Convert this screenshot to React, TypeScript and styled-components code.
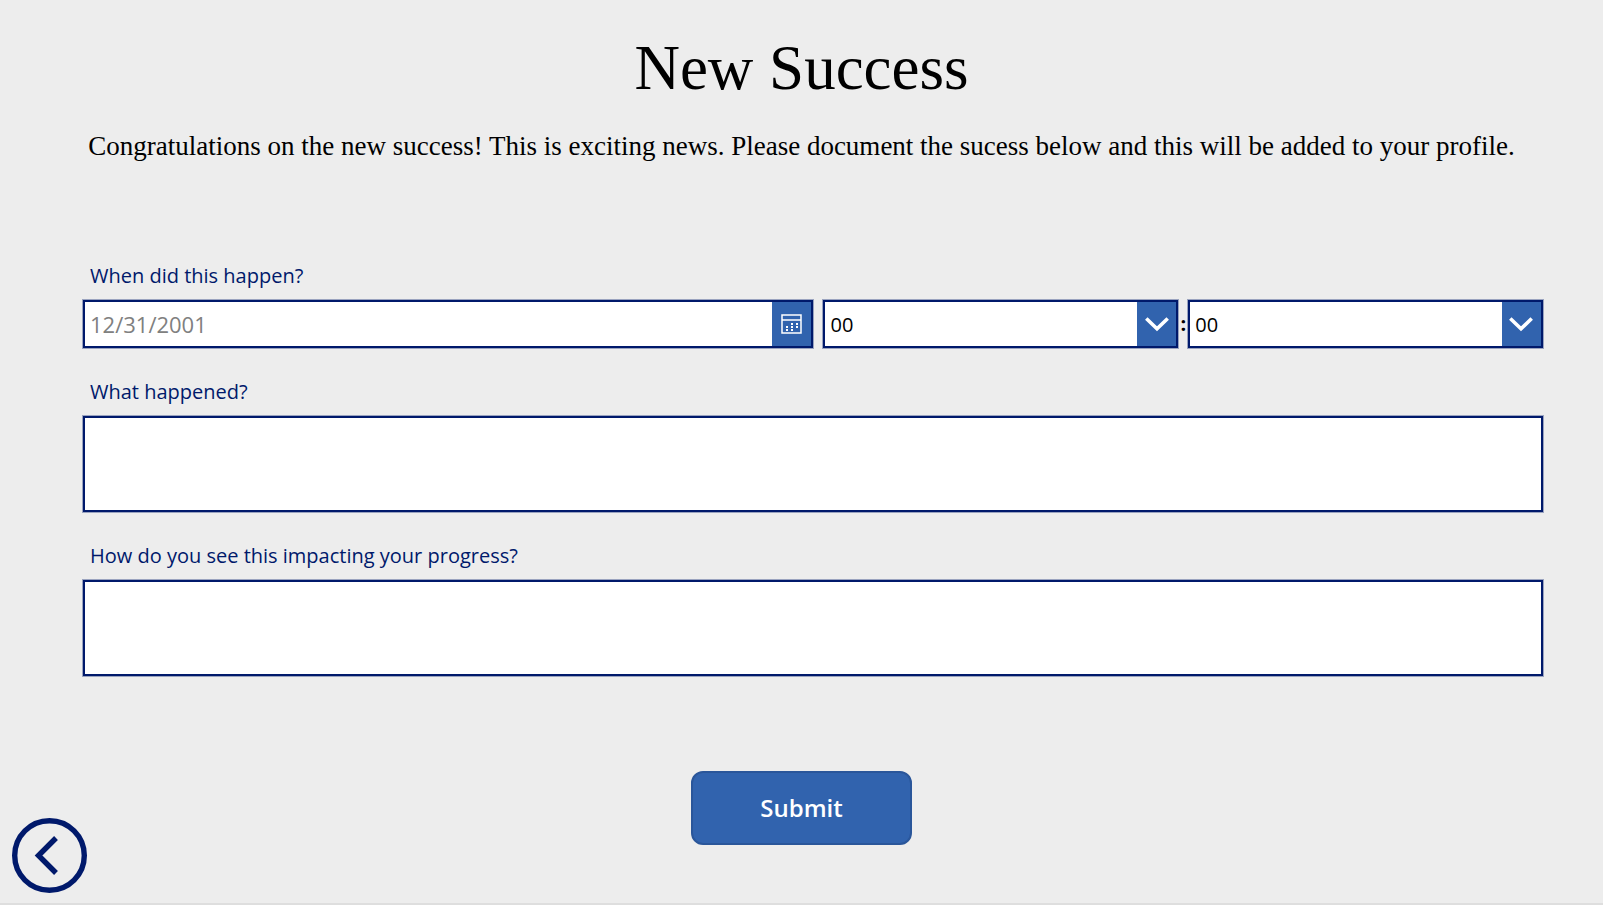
import React from "react";
import styled, { createGlobalStyle } from "styled-components";

const navy = "#00196b";
const blue = "#3163ae";
const sans = `"Open Sans", "Segoe UI", sans-serif`;
const serif = `Georgia, "Liberation Serif", serif`;

const GlobalStyle = createGlobalStyle`
  * { box-sizing: border-box; }
  body { margin: 0; background: #ededed; }
`;

const Page = styled.main`
  display: flex;
  flex-direction: column;
  min-height: 100vh;
  border-bottom: 2px solid #dedede;
  font-family: ${sans};
  color: ${navy};
`;

const Header = styled.header`
  padding: 30px 60px 0;
  font-family: ${serif};
  text-align: center;
  color: #000;
`;

const Title = styled.h1`
  margin: 0;
  font-size: 63px;
  line-height: 76px;
  font-weight: 400;
`;

const Intro = styled.p`
  margin: 22px 0 0;
  font-size: 27px;
  line-height: 36px;
`;

const Form = styled.form`
  flex: 1;
  display: flex;
  flex-direction: column;
`;

const Fields = styled.div`
  display: flex;
  flex-direction: column;
  gap: 28px;
  padding: 96px 60px 0 83px;
`;

const Field = styled.div`
  display: flex;
  flex-direction: column;
  gap: 8px;
`;

const Label = styled.label`
  padding-left: 7px;
  font-size: 20px;
  line-height: 32px;
`;

const DateTimeRow = styled.div`
  display: grid;
  grid-template-columns: 731fr 10px 355fr 10px 355fr;
`;

const Box = styled.div`
  display: grid;
  grid-template-columns: minmax(0, 1fr) 39px;
  height: 48px;
  border: 2px solid ${navy};
  box-shadow: 0 0 0 1px rgba(0, 25, 107, 0.35);
  background: #fff;
`;

const DateInput = styled.input`
  min-width: 0;
  padding: 0 5px;
  border: 0;
  outline: 0;
  background: transparent;
  font: 22px ${sans};
  color: #333;
  &::placeholder { color: #808080; opacity: 1; }
`;

const TimeSelect = styled.select`
  grid-area: 1 / 1 / 2 / 3;
  appearance: none;
  padding: 0 45px 0 5px;
  border: 0;
  border-radius: 0;
  outline: 0;
  background: transparent;
  font: 20px ${sans};
  color: #000;
`;

const IconButton = styled.button`
  display: flex;
  align-items: center;
  justify-content: center;
  padding: 0;
  border: 0;
  background: ${blue};
  color: #fff;
  cursor: pointer;
`;

const Arrow = styled.span`
  grid-area: 1 / 2 / 2 / 3;
  display: flex;
  align-items: center;
  justify-content: center;
  background: ${blue};
  pointer-events: none;
`;

const Colon = styled.span`
  font-size: 20px;
  line-height: 48px;
  font-weight: 700;
  text-align: center;
  color: #000;
`;

const TextArea = styled.textarea`
  display: block;
  width: 100%;
  height: 96px;
  padding: 8px;
  border: 2px solid ${navy};
  border-radius: 0;
  box-shadow: 0 0 0 1px rgba(0, 25, 107, 0.35);
  outline: 0;
  resize: none;
  background: #fff;
  font: 20px ${sans};
`;

const Actions = styled.div`
  flex: 1;
  display: grid;
  grid-template-columns: 1fr auto 1fr;
  margin-top: 95px;
  padding: 0 12px 10px;
`;

const Submit = styled.button`
  align-self: start;
  width: 221px;
  height: 74px;
  padding: 0 0 2px;
  border: 2px solid #2a569a;
  border-radius: 12px;
  background: ${blue};
  font: 600 24px ${sans};
  color: #fff;
  cursor: pointer;
`;

const Back = styled.button`
  align-self: end;
  justify-self: start;
  width: 75px;
  height: 75px;
  padding: 0;
  border: 0;
  background: none;
  cursor: pointer;
  svg { display: block; }
`;

function CalendarIcon() {
  const dots = [[10, 9], [15, 9], [5, 12], [10, 12], [15, 12], [5, 15], [10, 15]];
  return (
    <svg width="21" height="20" viewBox="0 0 21 20" aria-hidden="true">
      <path d="M1 1h19v18H1zM1 6h19" fill="none" stroke="#fff" strokeWidth="1.5" />
      {dots.map(([x, y]) => (
        <rect key={`${x}-${y}`} x={x} y={y} width="2" height="2" fill="#fff" />
      ))}
    </svg>
  );
}

function Chevron() {
  return (
    <svg width="26" height="16" viewBox="0 0 26 16" aria-hidden="true">
      <path d="M2.3 2.5 13 12.8 23.7 2.5" fill="none" stroke="#fff" strokeWidth="3.6" />
    </svg>
  );
}

function TimePart({ name, count }: { name: string; count: number }) {
  return (
    <Box>
      <TimeSelect aria-label={name} defaultValue="00">
        {Array.from({ length: count }, (_, i) => String(i).padStart(2, "0")).map((v) => (
          <option key={v}>{v}</option>
        ))}
      </TimeSelect>
      <Arrow>
        <Chevron />
      </Arrow>
    </Box>
  );
}

export default function App() {
  return (
    <Page>
      <GlobalStyle />
      <Header>
        <Title>New Success</Title>
        <Intro>
          Congratulations on the new success! This is exciting news. Please document the sucess
          below and this will be added to your profile.
        </Intro>
      </Header>
      <Form onSubmit={(e) => e.preventDefault()}>
        <Fields>
          <Field>
            <Label htmlFor="date">When did this happen?</Label>
            <DateTimeRow>
              <Box>
                <DateInput id="date" type="text" placeholder="12/31/2001" />
                <IconButton type="button" aria-label="Open calendar">
                  <CalendarIcon />
                </IconButton>
              </Box>
              <span />
              <TimePart name="Hour" count={24} />
              <Colon>:</Colon>
              <TimePart name="Minute" count={60} />
            </DateTimeRow>
          </Field>
          <Field>
            <Label htmlFor="what">What happened?</Label>
            <TextArea id="what" />
          </Field>
          <Field>
            <Label htmlFor="impact">How do you see this impacting your progress?</Label>
            <TextArea id="impact" />
          </Field>
        </Fields>
        <Actions>
          <Back type="button" aria-label="Back">
            <svg width="75" height="75" viewBox="0 0 75 75" aria-hidden="true">
              <circle cx="37.5" cy="37.5" r="34.8" fill="none" stroke={navy} strokeWidth="5.4" />
              <path d="M44 20 26.5 37.5 44 55" fill="none" stroke={navy} strokeWidth="5.4" />
            </svg>
          </Back>
          <Submit type="submit">Submit</Submit>
        </Actions>
      </Form>
    </Page>
  );
}
